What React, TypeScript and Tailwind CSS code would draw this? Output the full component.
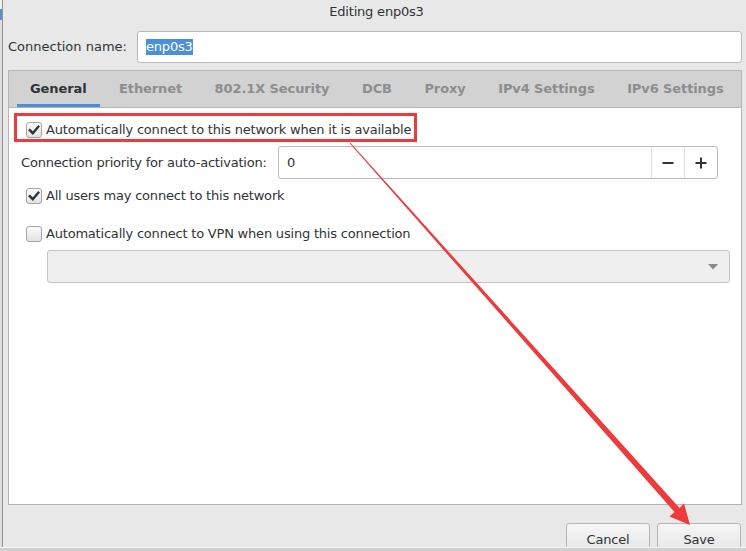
import React from "react";

const tabs = ["General", "Ethernet", "802.1X Security", "DCB", "Proxy", "IPv4 Settings", "IPv6 Settings"];

function Check({ checked }: { checked: boolean }) {
  return (
    <div className="w-[16px] h-[16px] rounded-[3px] border border-[#a4a4a4] bg-gradient-to-b from-[#fbfbfb] to-[#e2e2e2] flex items-center justify-center shrink-0">
      {checked && (
        <svg width="12" height="12" viewBox="0 0 12 12">
          <path d="M1.8 6.2 L4.8 9.2 L10.4 2.6" fill="none" stroke="#2e3436" strokeWidth="2.4" strokeLinecap="square" />
        </svg>
      )}
    </div>
  );
}

export default function App() {
  return (
    <div className="relative w-[746px] h-[551px] overflow-hidden bg-[#e8e8e8] text-[13px] tracking-[-0.2px] text-[#2e3436] font-['DejaVu_Sans',sans-serif] flex flex-col whitespace-nowrap">
      <div className="flex h-[547px]">
        {/* window behind the dialog */}
        <div className="w-[2px] shrink-0 flex flex-col">
          <div className="h-[9px] bg-[#eeeeee]" />
          <div className="h-[11px] bg-[#5a8fd2]" />
          <div className="flex-1 bg-[#dedede]" />
        </div>

        <div className="flex-1 min-w-0 border-l border-[#929292] flex flex-col pr-[4px]">
          <div className="h-[24px] flex items-center justify-center pl-[8px]">Editing enp0s3</div>

          <div className="mt-[7px] h-[32px] flex items-center">
            <div className="w-[134px] pl-[5px] tracking-normal">Connection name:</div>
            <div className="flex-1 h-full bg-white border border-[#b9b9b9] rounded-[3px] flex items-center pl-[8px]">
              <span className="bg-[#4a90d9] text-white leading-[16px]">enp0s3</span>
            </div>
          </div>

          <div className="mt-[7px] ml-[5px] h-[435px] border border-[#b4b4b4] flex flex-col">
            <div className="h-[37px] bg-[#d2d2d2] border-b border-[#b4b4b4] flex pl-[8px] gap-[6.5px] font-bold tracking-[-0.1px] overflow-hidden">
              {tabs.map((t, i) => (
                <div
                  key={t}
                  className={
                    i === 0
                      ? "px-[13px] flex items-center pt-[3px] border-b-[3px] border-[#4a90d9] text-[#2e3436]"
                      : "px-[13px] flex items-center text-[#8d8d8d]"
                  }
                >
                  {t}
                </div>
              ))}
            </div>

            <div className="relative flex-1 bg-white flex flex-col">
              {/* annotation box */}
              <div className="absolute left-[5px] top-[5px] w-[403px] h-[29px] border-[3px] border-[#ee3a3a]" />

              <div className="mt-[14px] ml-[17px] h-[16px] flex items-center gap-[4px]">
                <Check checked />
                <span>Automatically connect to this network when it is available</span>
              </div>

              <div className="mt-[8px] ml-[12px] h-[33px] flex items-center">
                <div className="w-[257px]">Connection priority for auto-activation:</div>
                <div className="w-[440px] h-full border border-[#b9b9b9] rounded-[3px] flex">
                  <div className="flex-1 flex items-center pl-[8px]">0</div>
                  <div className="w-[33px] border-l border-[#dedede] flex items-center justify-center">
                    <svg width="12" height="12" viewBox="0 0 12 12">
                      <rect x="0.5" y="5" width="11" height="2" fill="#2e3436" />
                    </svg>
                  </div>
                  <div className="w-[33px] border-l border-[#dedede] flex items-center justify-center">
                    <svg width="12" height="12" viewBox="0 0 12 12">
                      <rect x="0.5" y="5" width="11" height="2" fill="#2e3436" />
                      <rect x="5" y="0.5" width="2" height="11" fill="#2e3436" />
                    </svg>
                  </div>
                </div>
              </div>

              <div className="mt-[9px] ml-[17px] h-[16px] flex items-center gap-[4px]">
                <Check checked />
                <span>All users may connect to this network</span>
              </div>

              <div className="mt-[22px] ml-[17px] h-[16px] flex items-center gap-[4px]">
                <Check checked={false} />
                <span>Automatically connect to VPN when using this connection</span>
              </div>

              <div className="mt-[8px] ml-[38px] w-[683px] h-[33px] bg-[#efefef] border border-[#c4c4c4] rounded-[3px] flex items-center justify-end pr-[11px]">
                <svg width="10" height="6" viewBox="0 0 10 6">
                  <path d="M0 0 L10 0 L5 5.5 Z" fill="#8a8a8a" />
                </svg>
              </div>
            </div>
          </div>

          <div className="mt-[18px] flex-1 flex justify-end gap-[7px] mr-[1px] overflow-hidden">
            <button className="w-[84px] h-[30px] rounded-[3px] border border-[#b5b5b5] bg-gradient-to-b from-[#f6f6f6] to-[#e6e6e6] flex items-center justify-center pt-[3px]">
              Cancel
            </button>
            <button className="w-[84px] h-[30px] rounded-[3px] border border-[#b5b5b5] bg-gradient-to-b from-[#f6f6f6] to-[#e6e6e6] flex items-center justify-center pt-[3px]">
              Save
            </button>
          </div>
        </div>
      </div>

      <div className="h-[4px] bg-[#cfcfcf] border-t border-[#f4f4f4]" />

      {/* red annotation arrow */}
      <svg className="absolute inset-0 pointer-events-none" width="746" height="551" viewBox="0 0 746 551">
        <polygon
          points="350.4,142.7 679.5,508 684,503.5 690,525 669.5,516.5 674.5,512 349.6,143.3"
          fill="#ee3a3a"
        />
      </svg>
    </div>
  );
}
